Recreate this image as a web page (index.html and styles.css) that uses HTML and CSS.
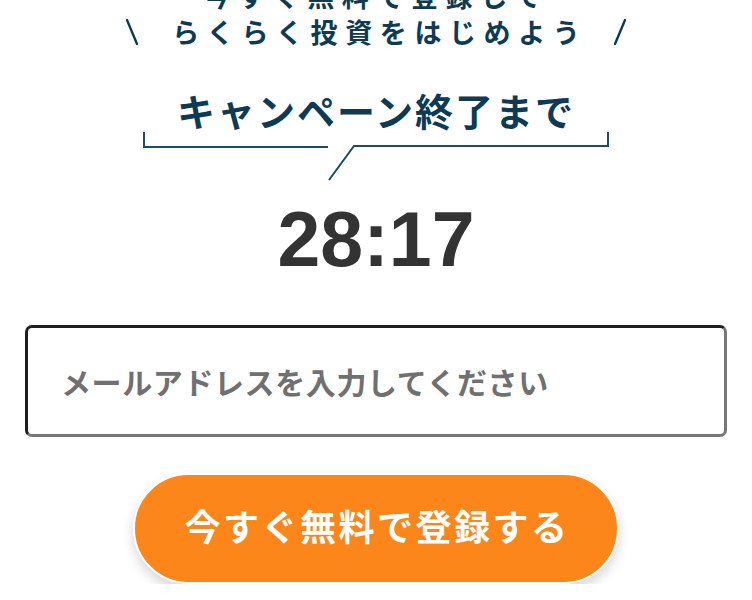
FILE: index.html
```html
<!DOCTYPE html>
<html lang="ja">
<head>
<meta charset="utf-8">
<title>キャンペーン</title>
<link rel="stylesheet" href="styles.css">
</head>
<body>
<main class="page">
  <div class="catch">
    <div class="catch-line">今すぐ無料で登録して</div>
    <div class="catch-line catch-row">
      <svg class="slash" width="12" height="26" viewBox="0 0 12 26"><line x1="1" y1="1" x2="11" y2="25" /></svg>
      <span class="catch-text">らくらく投資をはじめよう</span>
      <svg class="slash" width="12" height="26" viewBox="0 0 12 26"><line x1="11" y1="1" x2="1" y2="25" /></svg>
    </div>
  </div>
  <h2 class="heading">キャンペーン終了まで</h2>
  <svg class="bracket" width="470" height="50" viewBox="0 0 470 50">
    <polyline points="3,1 3,16 187,16" />
    <polyline points="188,49 213,15 467,15 467,1" />
  </svg>
  <div class="timer">28:17</div>
  <form class="form">
    <input class="email" type="email" placeholder="メールアドレスを入力してください">
    <button class="submit" type="button">今すぐ無料で登録する</button>
  </form>
</main>
</body>
</html>
```
FILE: styles.css
```css
html, body {
  margin: 0;
  padding: 0;
  background: #ffffff;
}
body {
  font-family: "Noto Sans CJK JP", "Noto Sans", sans-serif;
  overflow: hidden;
}
.page {
  width: 752px;
  display: flex;
  flex-direction: column;
  align-items: center;
}
.catch {
  margin-top: -22px;
  color: #0e3b53;
  font-weight: 700;
  font-size: 27px;
  line-height: 36px;
  letter-spacing: 7.6px;
  text-align: center;
}
.catch-line {
  height: 36px;
}
.catch-row {
  display: flex;
  align-items: center;
  justify-content: center;
  gap: 34px;
}
.catch-text {
  margin-right: -7.6px;
}
.slash line {
  stroke: #0e3b53;
  stroke-width: 2.4;
  stroke-linecap: round;
}
.heading {
  margin: 40px 0 0;
  color: #0e3b53;
  font-size: 38px;
  font-weight: 700;
  line-height: 40px;
  letter-spacing: 2px;
  text-align: center;
}
.bracket {
  display: block;
  margin-top: 1px;
}
.bracket polyline {
  fill: none;
  stroke: #1c4b64;
  stroke-width: 2;
}
.timer {
  margin-top: 18px;
  font-family: "Liberation Sans", Arial, sans-serif;
  font-weight: 700;
  font-size: 77px;
  line-height: 80px;
  color: #333333;
}
.form {
  margin-top: 46px;
  display: flex;
  flex-direction: column;
  align-items: center;
}
.email {
  box-sizing: border-box;
  width: 702px;
  height: 112px;
  margin: 0;
  padding: 0 0 0 33px;
  border: 3px solid;
  border-color: #1e1e1e #777777 #777777 #1e1e1e;
  border-radius: 7px;
  background: #ffffff;
  font-family: "Noto Sans CJK JP", sans-serif;
  font-size: 30px;
  font-weight: 700;
  letter-spacing: 0.6px;
  color: #333333;
  outline: none;
}
.email::placeholder {
  color: #707070;
  opacity: 1;
}
.submit {
  box-sizing: border-box;
  margin-top: 36px;
  width: 486px;
  height: 111px;
  border: 2px solid #ffffff;
  border-radius: 56px;
  background: #fd861b;
  box-shadow: 0 6px 12px rgba(0, 0, 0, 0.16);
  color: #ffffff;
  font-family: "Noto Sans CJK JP", sans-serif;
  font-size: 36px;
  font-weight: 700;
  letter-spacing: 2.5px;
  padding: 0 0 7px 2px;
}
```
